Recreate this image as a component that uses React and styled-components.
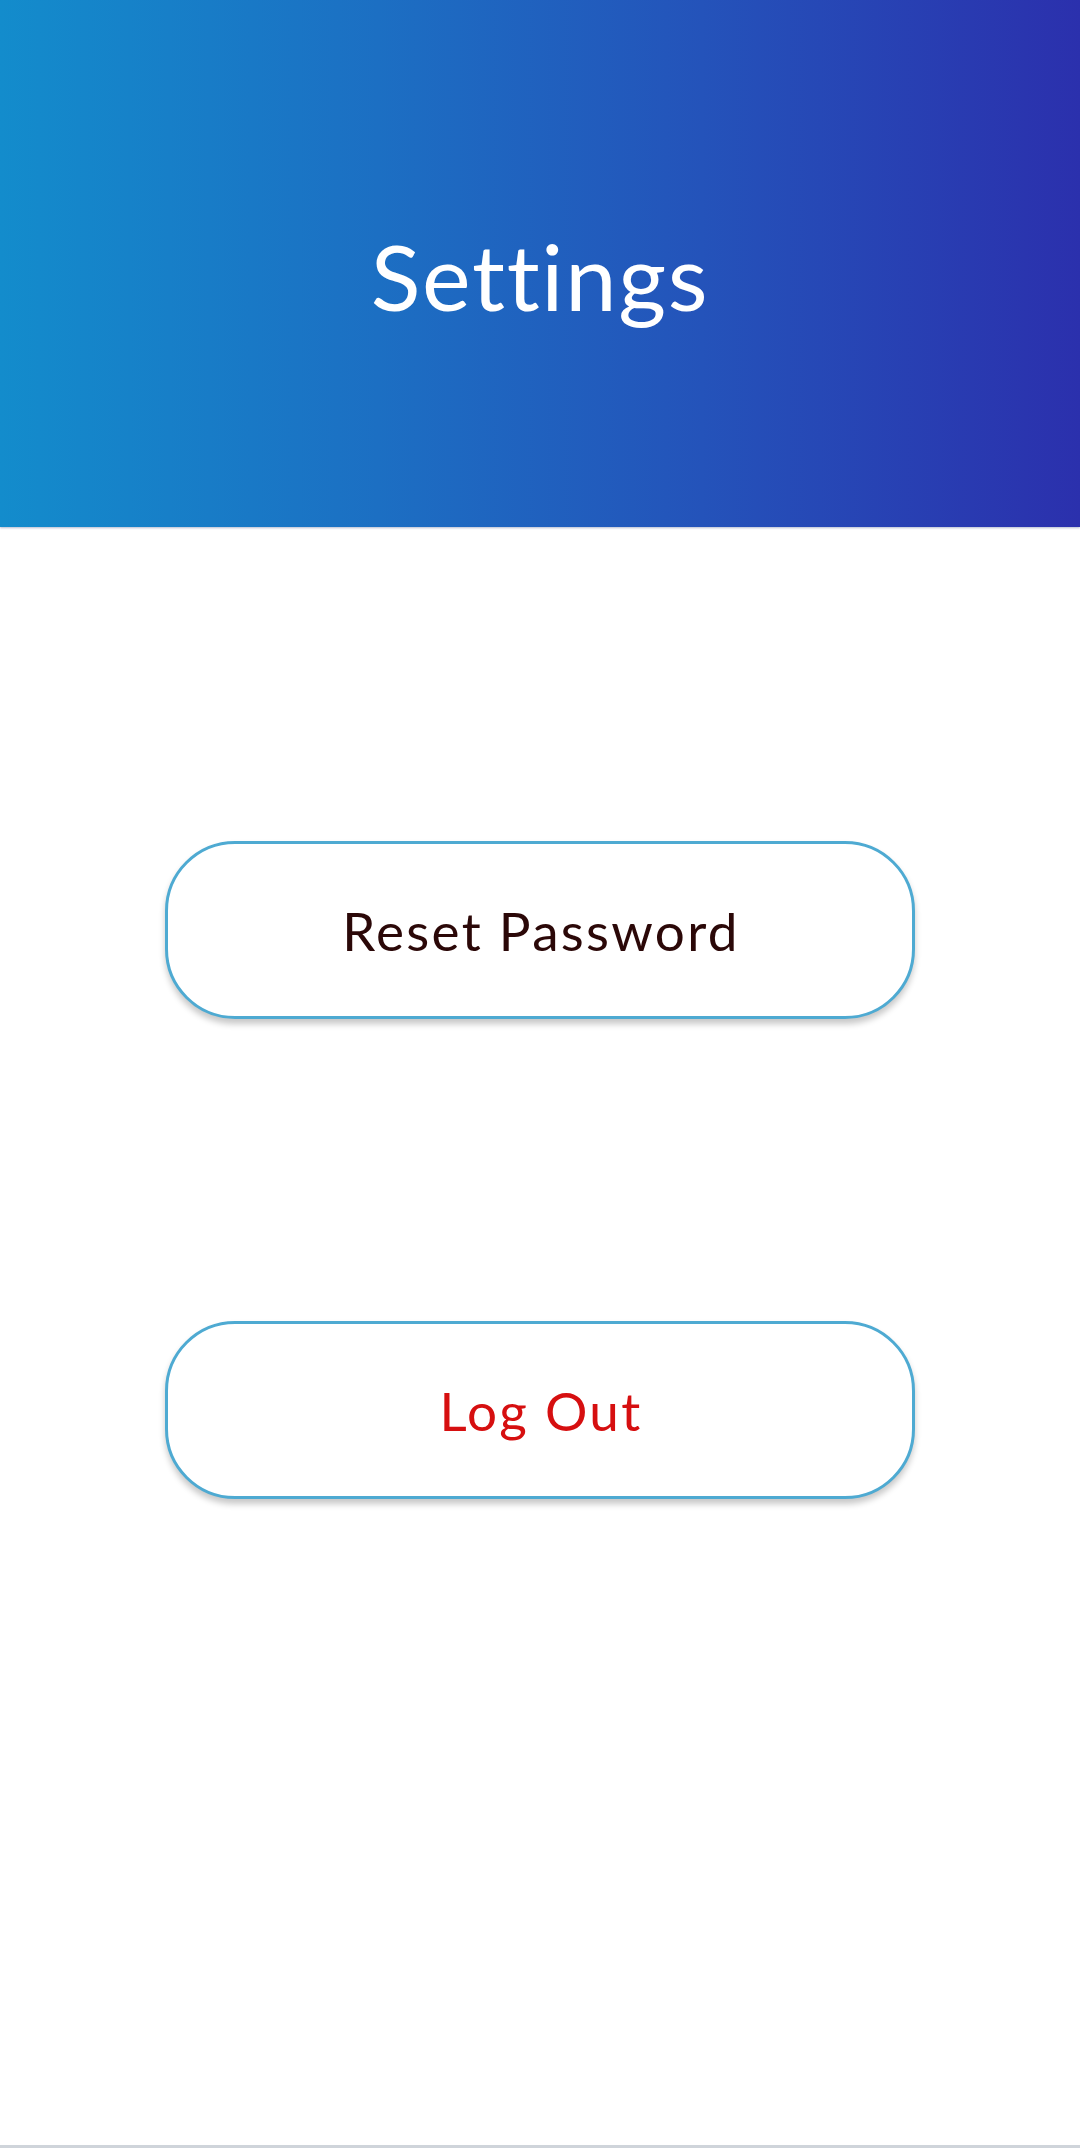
import styled, { createGlobalStyle } from 'styled-components';

const GlobalStyle = createGlobalStyle`
  html, body {
    margin: 0;
    padding: 0;
    background: #ffffff;
  }
  body {
    font-family: Lato, "Open Sans", sans-serif;
  }
`;

const Page = styled.div`
  display: flex;
  flex-direction: column;
  min-height: 2148px;
  width: 1080px;
  background: #ffffff;
  box-sizing: border-box;
  border-bottom: 3px solid #cfd4da;
`;

const Header = styled.header`
  height: 527px;
  display: flex;
  justify-content: center;
  padding-top: 226px;
  box-sizing: border-box;
  background: linear-gradient(90deg, #138ccc 0%, #1c6fc3 35%, #2453ba 65%, #2b30ad 100%);
  box-shadow: 0 1px 2px rgba(40, 60, 120, 0.35);
`;

const Title = styled.h1`
  margin: 0;
  color: #ffffff;
  font-family: Lato, "Open Sans", sans-serif;
  font-weight: 400;
  font-size: 92px;
  line-height: 100px;
  letter-spacing: 1.7px;
`;

const Actions = styled.main`
  display: flex;
  flex-direction: column;
  align-items: center;
  gap: 302px;
  padding-top: 314px;
`;

const ActionButton = styled.button`
  width: 750px;
  height: 178px;
  border: 3px solid #4eaad2;
  border-radius: 70px;
  background: #ffffff;
  box-shadow: 0 5px 6px rgba(0, 0, 0, 0.22);
  font-family: Lato, "Open Sans", sans-serif;
  font-size: 53px;
  font-weight: 400;
  letter-spacing: 2.3px;
  color: ${(p) => (p.$danger ? '#d60f10' : '#2b0808')};
  cursor: pointer;
  display: flex;
  align-items: center;
  justify-content: center;
  padding: 0 0 0 2px;
`;

function App() {
  return (
    <Page>
      <GlobalStyle />
      <Header>
        <Title>Settings</Title>
      </Header>
      <Actions>
        <ActionButton>Reset Password</ActionButton>
        <ActionButton $danger>Log Out</ActionButton>
      </Actions>
    </Page>
  );
}

export default App;
